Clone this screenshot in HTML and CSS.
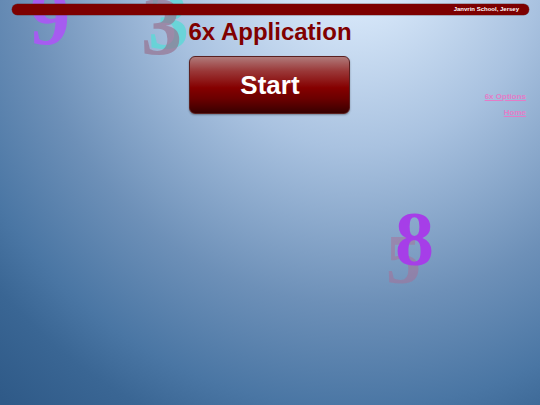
FILE: index.html
```html
<!DOCTYPE html>
<html>
<head>
<meta charset="utf-8">
<link rel="stylesheet" href="styles.css">
</head>
<body>
<div class="digits">
  <span class="digit d9">9</span>
  <span class="digit d3a">3</span>
  <span class="digit d3b">3</span>
  <span class="digit d5">5</span>
  <span class="digit d8">8</span>
</div>
<header class="topbar"><span class="school">Janvrin School, Jersey</span></header>
<main class="layout">
  <div class="side"></div>
  <div class="center">
    <h1 class="title">6x Application</h1>
    <button class="start">Start</button>
  </div>
  <nav class="links">
    <a href="#" class="link">6x Options</a>
    <a href="#" class="link">Home</a>
  </nav>
</main>
</body>
</html>
```
FILE: styles.css
```css
html, body {
  margin: 0;
  padding: 0;
  width: 540px;
  height: 405px;
  overflow: hidden;
}
body {
  position: relative;
  font-family: "Liberation Sans", Arial, sans-serif;
  background: radial-gradient(480px 520px at 355px -60px, #dfedfc 0%, #d3e4f7 15%, #a9c2e0 40%, #6d90b8 70%, #4a76a4 90%, #3a6694 100%, #2f5a88 115%);
  background-color: #3a6694;
}
.digits {
  position: absolute;
  inset: 0;
  z-index: 0;
  pointer-events: none;
}
.digit {
  position: absolute;
  font-family: "Liberation Serif", "Times New Roman", serif;
  font-weight: bold;
  line-height: 1;
}
.d9 { left: 30px; top: -23px; font-size: 80px; color: #a65cf0; }
.d3a { left: 148px; top: -20px; font-size: 82px; color: rgba(95, 215, 215, 0.85); }
.d3b { left: 141px; top: -14px; font-size: 82px; color: rgba(150, 110, 140, 0.65); }
.d5 { left: 386px; top: 225px; font-size: 70px; color: rgba(175, 105, 145, 0.45); }
.d8 { left: 395px; top: 200px; font-size: 78px; color: #a63ee8; }

.topbar {
  position: relative;
  z-index: 1;
  margin: 4px 11px 0 12px;
  height: 11px;
  background: #7d0000;
  border-radius: 6px;
  box-shadow: 0 0 0 0.5px rgba(90, 40, 40, 0.6);
  display: flex;
  align-items: center;
  justify-content: flex-end;
  padding-right: 10px;
}
.school {
  color: #fff;
  font-size: 6px;
  font-weight: bold;
  line-height: 11px;
}
.layout {
  position: relative;
  z-index: 1;
  display: grid;
  grid-template-columns: 1fr auto 1fr;
  margin-top: 3px;
}
.center {
  display: flex;
  flex-direction: column;
  align-items: center;
}
.title {
  margin: 0;
  font-size: 24px;
  line-height: 28px;
  font-weight: bold;
  color: #800000;
}
.start {
  margin-top: 10px;
  width: 161px;
  height: 58px;
  border: 1px solid #5a2020;
  border-radius: 6px;
  background: linear-gradient(to bottom, #b07a7a 0%, #9a3838 25%, #850000 55%, #6a0000 75%, #380000 100%);
  box-shadow: 0 1px 2px rgba(0, 0, 0, 0.35);
  color: #fff;
  font-family: "Liberation Sans", Arial, sans-serif;
  font-size: 26px;
  font-weight: bold;
  padding: 0;
}
.links {
  display: flex;
  flex-direction: column;
  align-items: flex-end;
  padding-top: 71px;
  padding-right: 14px;
}
.link {
  font-size: 8px;
  line-height: 16px;
  font-weight: bold;
  color: #e47cc8;
  text-decoration: underline;
}
```
